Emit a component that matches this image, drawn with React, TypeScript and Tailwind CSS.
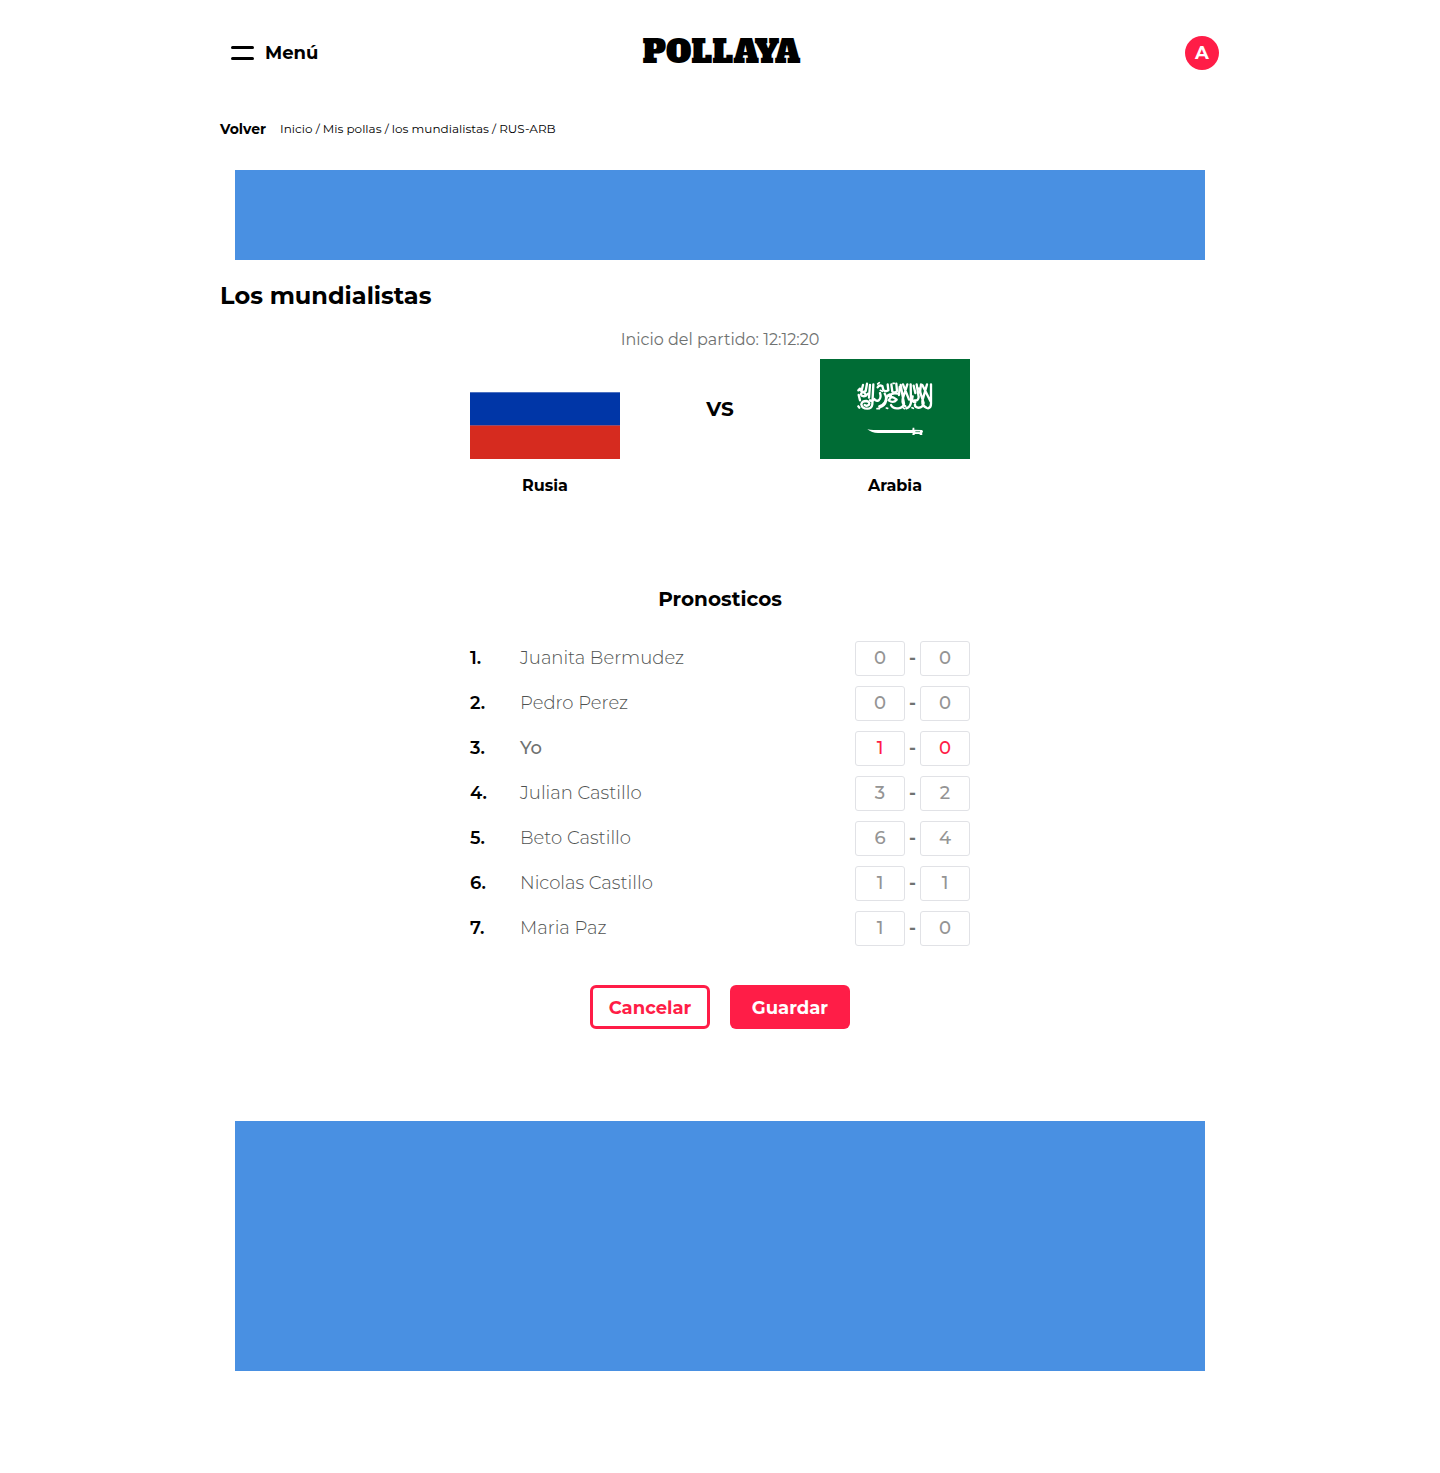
import React from "react";

type Prediction = { name: string; home: number; away: number; own?: boolean };

const predictions: Prediction[] = [
  { name: "Juanita Bermudez", home: 0, away: 0 },
  { name: "Pedro Perez", home: 0, away: 0 },
  { name: "Yo", home: 1, away: 0, own: true },
  { name: "Julian Castillo", home: 3, away: 2 },
  { name: "Beto Castillo", home: 6, away: 4 },
  { name: "Nicolas Castillo", home: 1, away: 1 },
  { name: "Maria Paz", home: 1, away: 0 },
];

function RussiaFlag() {
  return (
    <svg viewBox="0 0 150 100" className="block h-[100px] w-[150px]" role="img" aria-label="Bandera de Rusia">
      <rect width="150" height="100" fill="#fff" />
      <rect y="33.3" width="150" height="33.4" fill="#0036a7" />
      <rect y="66.5" width="150" height="33.5" fill="#d62b1f" />
    </svg>
  );
}

function ArabiaFlag() {
  return (
    <svg viewBox="0 0 450 300" className="block h-[100px] w-[150px]" role="img" aria-label="Bandera de Arabia">
      <rect width="450" height="300" fill="#006c35" />
      <g fill="none" stroke="#fff" strokeWidth="7" strokeLinecap="round" strokeLinejoin="round">
        <path d="M333 76v58q0 12-9 14M321 76l-14 50q-1 14 12 20M307 78l24 48M297 88l14 44q-4 16-18 14q-10-3-8-10" />
        <path d="M303 76l-3 24M290 76l6 38q-1 12-12 10M278 112q-5 16 8 18M281 80l5 22M272 76l1 54q-2 14-14 18" />
        <path d="M262 76l-14 44q-2 16 8 22M249 76l18 46M242 78l10 56q-3 12-17 14q-16 2-22-10M239 84l-2 24" />
        <path d="M229 74l2 22q-6 8-14 2l-3-22M203 76l2 18q-9 6-15-1l-3-12q-10-4-14 4" />
        <path d="M233 104q-18-4-25 8q14 2 22 10q-10 12-24 2q12-14 4-18q-12 4-12 20q-3 14-19 19" />
        <path d="M194 104q8 12 1 25q-5 9-17 13M180 102q5 14-4 22q-9 4-13-4q-5 8-13 4" />
        <path d="M160 76l-3 60q-2 13-15 13q-16 0-18-13q2-10 15-10q12 3 8 11q-6 6-13 1M150 78l-3 38" />
        <path d="M141 74l-4 22q-10 6-15-2M129 78l-4 16M144 104q-7 10-17 7q-7-4-2-10q9-3 11 5M116 108l4 16M115 94l5-5M115 142l3 4" />
      </g>
      <g fill="none" stroke="#fff" strokeWidth="5" strokeLinecap="round">
        <path d="M173 75l5-4M219 73l4 0M249 146l4 3M276 146l4 2M171 149l7 0M199 147l4 1M181 94l6 3" />
      </g>
      <path
        d="M142 211q9 2 18 2h117l1-7h5v6l22 1q4 1 4 5q-4 2-2 10h-7l-2-3h-13l-2 3h-6l1-6h-104q-19 0-32-11z"
        fill="#fff"
      />
      <path d="M286 218h14" stroke="#006c35" strokeWidth="2" />
    </svg>
  );
}

function Team({ name, children }: { name: string; children: React.ReactNode }) {
  return (
    <figure className="flex w-[150px] flex-col items-center">
      {children}
      <figcaption className="mt-[17px] text-base leading-5 font-bold">{name}</figcaption>
    </figure>
  );
}

function ScoreInput({ value, label, own }: { value: number; label: string; own?: boolean }) {
  return (
    <input
      type="text"
      inputMode="numeric"
      aria-label={label}
      defaultValue={value}
      className={
        own
          ? "h-[35px] w-[50px] rounded-[3px] border border-[#e1e2e6] bg-white pb-px text-center text-lg font-medium text-[#ff1d47] outline-none"
          : "h-[35px] w-[50px] rounded-[3px] border border-[#e1e2e6] bg-white pb-px text-center text-lg font-medium text-[#949494] outline-none"
      }
    />
  );
}

export default function App() {
  return (
    <div className="min-h-screen bg-white px-4 pb-[102px] font-['Montserrat','Inter',sans-serif] text-black">
      <div className="mx-auto max-w-[1000px]">
        <header className="grid h-[106px] grid-cols-3 items-center">
          <button type="button" className="ml-[11px] flex items-center gap-[11px] justify-self-start">
            <span className="flex w-[23px] flex-col gap-2">
              <span className="h-[3px] rounded-full bg-black" />
              <span className="h-[3px] rounded-full bg-black" />
            </span>
            <span className="text-lg font-bold">Menú</span>
          </button>
          <a
            href="#inicio"
            className="justify-self-center pb-[2px] pl-[3px] font-['Alfa_Slab_One','DejaVu_Serif_Condensed','DejaVu_Serif',serif] text-[32px] leading-10 font-normal"
          >
            POLLAYA
          </a>
          <button
            type="button"
            aria-label="Cuenta"
            className="mr-px flex size-[34px] items-center justify-center justify-self-end rounded-full bg-[#ff1d47] text-lg font-bold text-white"
          >
            A
          </button>
        </header>

        <nav aria-label="Ruta" className="mt-3 flex items-center gap-[14px] leading-[22px]">
          <a href="#volver" className="text-sm leading-[22px] font-bold">Volver</a>
          <p className="text-xs leading-[22px]">
            <a href="#inicio">Inicio</a> / <a href="#pollas">Mis pollas</a> / <a href="#mundialistas">los mundialistas</a> / RUS-ARB
          </p>
        </nav>

        <aside aria-label="Publicidad" className="mx-[15px] mt-[30px] h-[90px] bg-[#4990e2]" />

        <main>
          <h1 className="mt-5 text-2xl leading-8 font-bold">Los mundialistas</h1>
          <p className="mt-4 text-center text-base leading-6 text-[#6f7271]">Inicio del partido: 12:12:20</p>

          <section aria-label="Partido" className="mx-auto mt-[7px] flex max-w-[500px] justify-between">
            <Team name="Rusia">
              <RussiaFlag />
            </Team>
            <span className="flex h-[100px] items-center text-xl font-bold">VS</span>
            <Team name="Arabia">
              <ArabiaFlag />
            </Team>
          </section>

          <form className="mx-auto mt-[89px] max-w-[500px]" onSubmit={(e) => e.preventDefault()}>
            <h2 className="text-center text-xl leading-7 font-bold">Pronosticos</h2>
            <ol className="mt-7 flex flex-col gap-[10px]">
              {predictions.map((p, i) => (
                <li key={p.name} className="flex h-[35px] items-center text-lg">
                  <span className="w-[50px] pb-[2px] font-semibold">{i + 1}.</span>
                  <span
                    className={
                      p.own ? "flex-1 pb-[2px] font-medium text-[#6f7271]" : "flex-1 pb-[2px] font-light text-[#4f5251]"
                    }
                  >
                    {p.name}
                  </span>
                  <ScoreInput value={p.home} label={`${p.name}: goles de Rusia`} own={p.own} />
                  <span className="w-[15px] pb-[2px] text-center font-bold text-[#6f7271]">-</span>
                  <ScoreInput value={p.away} label={`${p.name}: goles de Arabia`} own={p.own} />
                </li>
              ))}
            </ol>
            <div className="mt-[39px] flex justify-center gap-5">
              <button
                type="button"
                className="h-11 w-[120px] rounded-md border-3 border-[#ff1d47] pt-[2px] text-lg font-bold text-[#ff1d47]"
              >
                Cancelar
              </button>
              <button type="submit" className="h-11 w-[120px] rounded-md bg-[#ff1d47] pt-[2px] text-lg font-bold text-white">
                Guardar
              </button>
            </div>
          </form>
        </main>

        <aside aria-label="Publicidad" className="mx-[15px] mt-[92px] h-[250px] bg-[#4990e2]" />
      </div>
    </div>
  );
}
